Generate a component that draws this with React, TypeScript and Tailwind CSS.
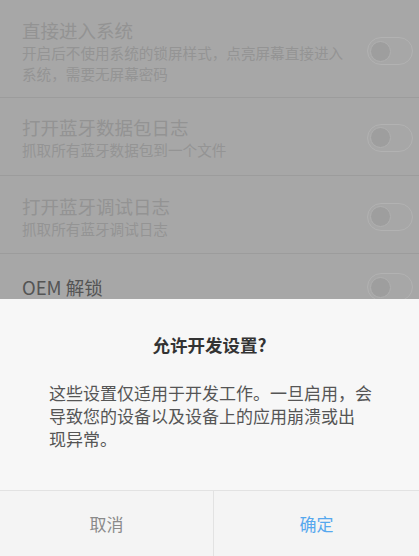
const cjk = { fontFamily: '"Noto Sans CJK SC", "Noto Sans", sans-serif' };

type Row = {
    title: string;
    lines: string[];
    enabled?: boolean;
    pad: string;
};

const rows: Row[] = [
    {
        title: '直接进入系统',
        lines: ['开启后不使用系统的锁屏样式，点亮屏幕直接进入', '系统，需要无屏幕密码'],
        pad: 'pt-[18px] pb-[13px]',
    },
    { title: '打开蓝牙数据包日志', lines: ['抓取所有蓝牙数据包到一个文件'], pad: 'pt-[17px] pb-[15px]' },
    { title: '打开蓝牙调试日志', lines: ['抓取所有蓝牙调试日志'], pad: 'pt-[18px] pb-[14px]' },
    { title: 'OEM 解锁', lines: [], enabled: true, pad: 'pt-[19px] pb-[20px]' },
];

const Toggle = () => (
    <div className="w-[46px] h-[28px] shrink-0 rounded-full border-[1.5px] border-[#b2b2b2] flex items-center px-[2px]">
        <div className="w-[21px] h-[21px] rounded-full bg-[#9e9e9e] border border-[#b0b0b0]" />
    </div>
);

const SettingRow = ({ row }: { row: Row }) => (
    <div className={`flex items-center border-b border-[#9c9c9c] pl-[22px] pr-[6px] ${row.pad}`}>
        <div className="flex-1 min-w-0">
            <p className={`text-[18.5px] leading-[24px] ${row.enabled ? 'text-[#545454]' : 'text-[#939393]'}`}>
                {row.title}
            </p>
            {row.lines.map((l) => (
                <p key={l} className="text-[14.6px] leading-[21px] text-[#949494] whitespace-nowrap">
                    {l}
                </p>
            ))}
        </div>
        <Toggle />
    </div>
);

export default function App() {
    return (
        <div className="relative w-[419px] h-[556px] overflow-hidden bg-[#a7a7a7]" style={cjk}>
            {/* dimmed settings list behind the dialog */}
            <div className="flex flex-col border-t border-[#b0b0b0] -mt-px">
                {rows.map((r) => (
                    <SettingRow key={r.title} row={r} />
                ))}
            </div>

            {/* bottom sheet dialog */}
            <div className="absolute left-0 right-0 bottom-0 h-[257px] bg-[#f7f7f7] flex flex-col">
                <h2 className="pt-[33px] text-center text-[17.5px] leading-[26px] font-bold text-[#333333]">
                    允许开发设置?
                </h2>
                <div className="mt-[23px] pl-[49px] text-[17px] leading-[23px] text-[#555555]">
                    <p className="whitespace-nowrap">这些设置仅适用于开发工作。一旦启用，会</p>
                    <p className="whitespace-nowrap">导致您的设备以及设备上的应用崩溃或出</p>
                    <p className="whitespace-nowrap">现异常。</p>
                </div>
                <div className="mt-auto h-[66px] flex border-t border-[#e2e2e2] bg-[#f4f4f4]">
                    <button className="w-[214px] shrink-0 text-[17px] text-[#8a8a8a] border-r border-[#e2e2e2]">
                        取消
                    </button>
                    <button className="flex-1 text-[17px] text-[#56a8ee]">确定</button>
                </div>
            </div>
        </div>
    );
}
